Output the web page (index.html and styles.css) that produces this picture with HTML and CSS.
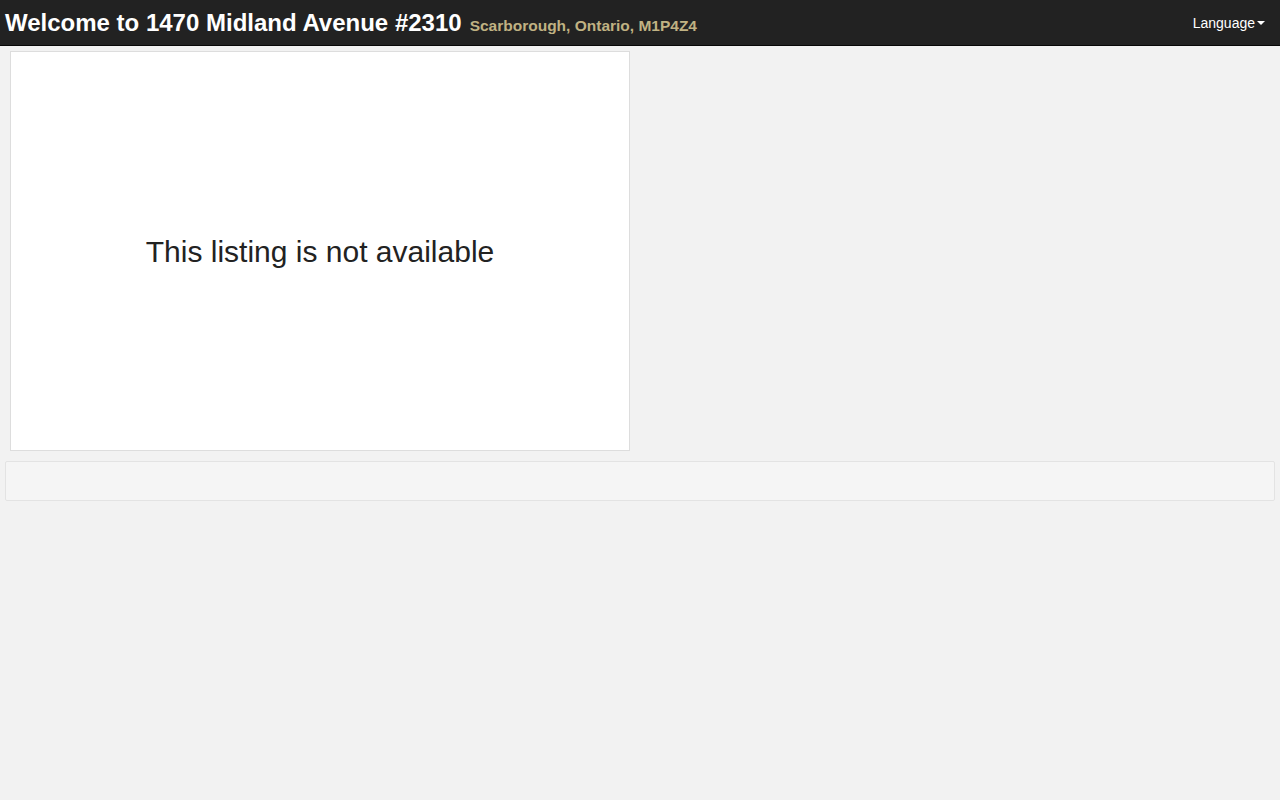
FILE: index.html
```html
<!DOCTYPE html>
<html>
<head>
<meta charset="utf-8">
<link rel="stylesheet" href="styles.css">
</head>
<body>
<header class="navbar">
  <div class="brand">
    <span class="title">Welcome to 1470 Midland Avenue #2310</span>
    <span class="subtitle">Scarborough, Ontario, M1P4Z4</span>
  </div>
  <div class="lang">Language<span class="caret"></span></div>
</header>
<main class="content">
  <div class="row">
    <div class="card">
      <div class="notice">This listing is not available</div>
    </div>
  </div>
  <div class="well"></div>
</main>
</body>
</html>
```
FILE: styles.css
```css
html, body { margin: 0; padding: 0; }
body {
  background: #f2f2f2;
  font-family: "Liberation Sans", Arial, sans-serif;
  color: #222;
}
.navbar {
  height: 45px;
  background: #222;
  border-bottom: 1px solid #080808;
  display: flex;
  align-items: center;
  justify-content: space-between;
  box-sizing: content-box;
}
.brand {
  padding-left: 5px;
  display: flex;
  align-items: baseline;
}
.title {
  color: #fff;
  font-weight: bold;
  font-size: 24px;
}
.subtitle {
  color: #c0b283;
  font-weight: bold;
  font-size: 15.5px;
  margin-left: 8px;
}
.lang {
  color: #fff;
  font-size: 14px;
  padding-right: 15px;
  padding-top: 1px;
  display: flex;
  align-items: center;
}
.caret {
  display: inline-block;
  width: 0;
  height: 0;
  margin-left: 2px;
  border-top: 4px solid #fff;
  border-left: 4px solid transparent;
  border-right: 4px solid transparent;
}
.content {
  padding: 5px 5px 0 5px;
}
.row {
  padding-left: 5px;
}
.card {
  width: 618px;
  height: 398px;
  background: #fff;
  border: 1px solid #ddd;
  display: flex;
  align-items: center;
  justify-content: center;
}
.notice {
  font-size: 30px;
  color: #222;
  padding-top: 2px;
}
.well {
  margin-top: 10px;
  height: 38px;
  background: #f5f5f5;
  border: 1px solid #e3e3e3;
  border-radius: 2px;
}
```
